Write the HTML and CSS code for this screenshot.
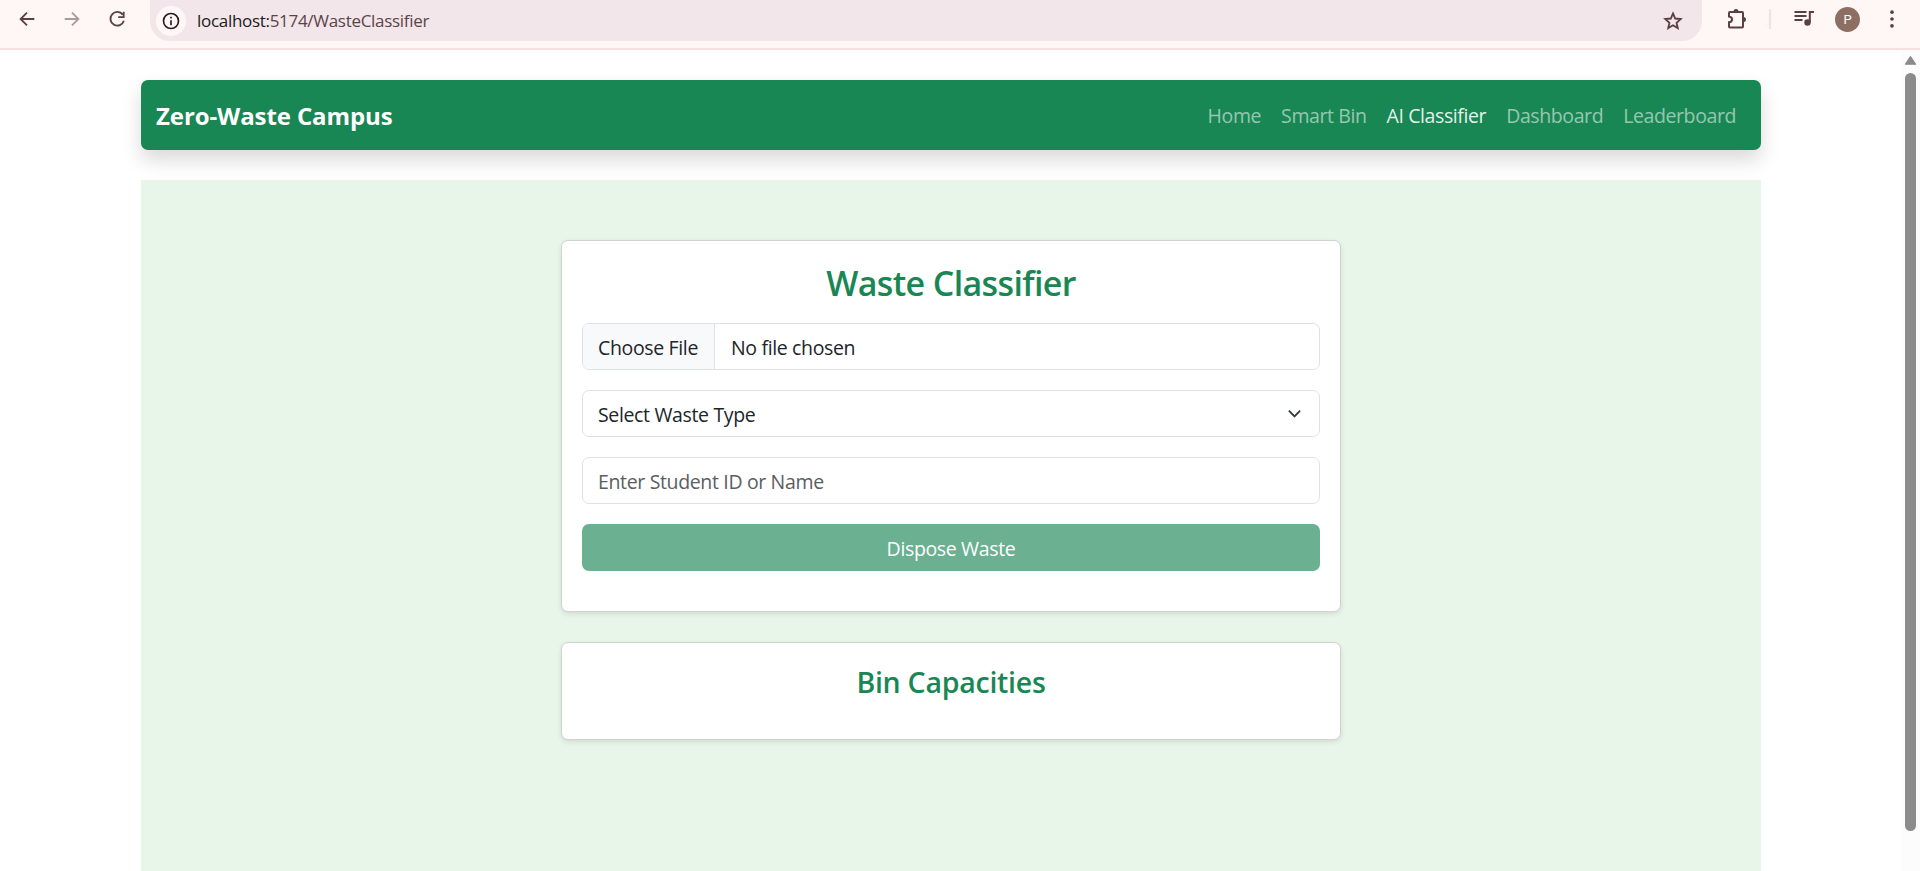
FILE: index.html
```html
<!DOCTYPE html>
<html lang="en">
<head>
<meta charset="utf-8">
<title>Zero-Waste Campus</title>
<link rel="stylesheet" href="styles.css">
</head>
<body>
<header class="toolbar">
  <svg class="tool back" viewBox="0 0 24 24"><path d="M20 12H5M12 5l-7 7 7 7"/></svg>
  <svg class="tool forward" viewBox="0 0 24 24"><path d="M4 12h15M12 5l7 7-7 7"/></svg>
  <svg class="tool reload" viewBox="0 0 24 24"><path d="M18.300 7.200A7.500 7.500 0 1 0 19.500 14M19.300 4v6h-6"/></svg>
  <div class="address">
    <span class="site-info"><svg viewBox="0 0 24 24"><circle cx="12" cy="12" r="9"/><path d="M12 11v6M12 7v2"/></svg></span>
    <span class="url"><span class="host">localhost:</span>5174/WasteClassifier</span>
    <svg class="star" viewBox="0 0 24 24"><path d="M12 3.800l2.400 5.500 6 .6-4.500 4 1.300 5.900-5.200-3.100-5.200 3.100 1.300-5.900-4.500-4 6-.6z"/></svg>
  </div>
  <svg class="puzzle" viewBox="0 0 24 24"><path d="M4 15.200V19.500q0 1 1 1h12q1 0 1-1V6q0-1-1-1H5q-1 0-1 1v3.600c4 .4 4 5.200 0 5.600z"/><path class="solid" d="M8.500 4.500a2.500 2.500 0 0 1 5 0zM18.500 10a2.500 2.500 0 0 1 0 5z"/></svg>
  <i class="divider"></i>
  <svg class="media" viewBox="0 0 24 24"><path d="M2.500 5h12M2.500 9h12M2.500 13h8M17.800 15.500V5h4.200"/><circle class="solid" cx="15.500" cy="15.500" r="3.200"/></svg>
  <span class="avatar">P</span>
  <svg class="more" viewBox="0 0 24 24"><circle cx="12" cy="4.500" r="2"/><circle cx="12" cy="12" r="2"/><circle cx="12" cy="19.500" r="2"/></svg>
</header>
<div class="viewport">
  <div class="page">
    <nav class="navbar">
      <a class="brand">Zero-Waste Campus</a>
      <div class="links"><a>Home</a><a>Smart Bin</a><a class="active">AI Classifier</a><a>Dashboard</a><a>Leaderboard</a></div>
    </nav>
    <main class="content">
      <section class="card form-card">
        <h2>Waste Classifier</h2>
        <div class="field file"><span class="choose">Choose File</span><span class="chosen">No file chosen</span></div>
        <div class="field select"><span>Select Waste Type</span><svg viewBox="0 0 16 16"><path d="m2 5 6 6 6-6"/></svg></div>
        <div class="field placeholder"><span>Enter Student ID or Name</span></div>
        <button class="submit" disabled>Dispose Waste</button>
      </section>
      <section class="card bins"><h4>Bin Capacities</h4></section>
    </main>
  </div>
  <div class="scrollbar"><svg viewBox="0 0 12 10"><path d="M6 1.500 10.800 8.500H1.200z"/></svg><i class="thumb"></i></div>
</div>
</body>
</html>
```
FILE: styles.css
```css
* { box-sizing: border-box; }
body { margin: 0; height: 871px; overflow: hidden; display: flex; flex-direction: column; background: #fff; color: #212529; font: 19.5px/30px "Open Sans", "Noto Sans", sans-serif; letter-spacing: -.35px; }
svg { fill: none; stroke: #5a3f43; stroke-width: 2; flex: none; }
.toolbar { height: 50px; flex: none; display: flex; align-items: center; padding: 0 0 10px 16px; background: #fff7f5; border-bottom: 2px solid #f5dfe1; }
.tool { width: 22px; height: 22px; margin-right: 23px; }
.forward { opacity: .5; }
.address { width: 1552px; height: 41px; margin: 0 23px 0 -1px; display: flex; align-items: center; align-self: flex-start; border-radius: 0 0 20px 20px; background: #f2e6ea; padding-left: 6px; }
.site-info { display: flex; width: 30px; height: 30px; border-radius: 50%; background: #fff7f5; align-items: center; justify-content: center; }
.site-info svg { width: 20px; stroke: #2b1d20; }
.url { margin-left: 11px; font-size: 17px; letter-spacing: -.3px; color: #5a4448; }
.host { color: #201a1b; }
.star { width: 22px; margin-left: auto; margin-right: 18px; }
.puzzle { width: 24px; }
.solid { fill: #5a3f43; stroke: none; }
.divider { width: 2px; height: 20px; margin: 0 21px 0 20px; background: #fddde1; }
.media { width: 24px; }
.avatar { width: 25px; height: 25px; margin-left: 19px; border-radius: 50%; background: #8d6e63; color: #fff; font: 13px/25px Roboto, sans-serif; text-align: center; }
.more { width: 22px; margin-left: 21px; fill: #5a3f43; stroke: none; }
.viewport { flex: 1; min-height: 0; display: flex; justify-content: space-between; }
.page { width: 1620px; margin-left: 141px; padding-top: 30px; display: flex; flex-direction: column; }
.navbar { height: 70px; flex: none; display: flex; align-items: center; justify-content: space-between; padding: 2px 25px 0 15px; border-radius: 7px; background: #198754; box-shadow: 0 10px 20px rgba(0,0,0,.15); color: #fff; }
.brand { font-weight: 700; font-size: 24px; letter-spacing: -.1px; }
.links { display: flex; gap: 20px; letter-spacing: -.4px; color: rgba(255,255,255,.55); }
.active { color: rgba(255,255,255,.9); }
.content { flex: 1; margin-top: 30px; padding-top: 60px; background: #e8f5e9; display: flex; flex-direction: column; align-items: center; gap: 30px; }
.card { width: 780px; flex: none; border: 1px solid #cfd3d0; border-radius: 7px; background: #fff; box-shadow: 0 2px 5px rgba(0,0,0,.1); padding: 20px; text-align: center; }
.form-card { height: 372px; display: flex; flex-direction: column; gap: 20px; }
.bins { height: 98px; }
h2, h4 { margin: 0; color: #198754; font-weight: 600; }
h2 { font-size: 34px; line-height: 44px; letter-spacing: -.63px; margin-bottom: -2px; }
h4 { font-size: 28.5px; line-height: 38px; letter-spacing: -.25px; }
.field { height: 47px; flex: none; display: flex; align-items: center; border: 1px solid #dee2e6; border-radius: 7px; padding: 2px 15px 0; overflow: hidden; }
.choose { height: 47px; line-height: 47px; width: 132px; margin: -2px 0 0 -15px; padding: 1px 0 0 15px; text-align: left; background: #f8f9fa; border-right: 1px solid #dee2e6; }
.chosen { margin-left: 16px; }
.select svg { width: 15px; margin: -3px 2px 0 auto; stroke: #343a40; }
.placeholder { color: #5a5e62; }
.submit { height: 47px; flex: none; border: 0; border-radius: 7px; background: #6bb091; color: #fff; font: inherit; letter-spacing: inherit; padding: 2px 0 0; }
.scrollbar { width: 19px; background: #fcfcfc; display: flex; flex-direction: column; align-items: center; padding-top: 5px; }
.scrollbar svg { width: 13px; fill: #8b8b8b; stroke: #8b8b8b; stroke-width: 1; stroke-linejoin: round; }
.thumb { width: 11px; height: 758px; margin-top: 7px; border-radius: 6px; background: #8b8b8b; }
```
